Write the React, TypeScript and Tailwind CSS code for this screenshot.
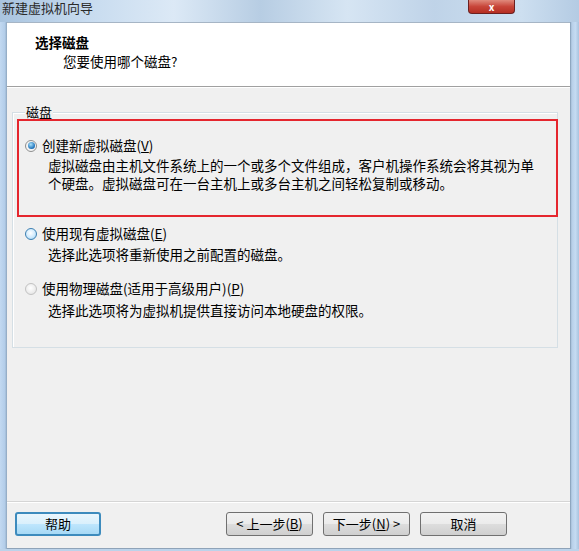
import React from 'react'

const font = { fontFamily: '"Noto Sans CJK SC", "Microsoft YaHei", sans-serif' }

function Radio({ state }: { state: 'on' | 'off' | 'disabled' }) {
  if (state === 'on') {
    return (
      <span className="w-[12px] h-[12px] rounded-full border border-[#8e8f8f] bg-[#f4f4f4] flex items-center justify-center shrink-0">
        <span className="w-[7px] h-[7px] rounded-full bg-[radial-gradient(circle_at_40%_35%,#a9e1fb,#1a6fb8_70%,#0f4b87)]" />
      </span>
    )
  }
  if (state === 'off') {
    return (
      <span className="w-[12px] h-[12px] rounded-full border border-[#3c7fb1] bg-[radial-gradient(circle_at_45%_40%,#ffffff,#cfeafd_55%,#8fcaf0)] shrink-0" />
    )
  }
  return (
    <span className="w-[12px] h-[12px] rounded-full border border-[#c2c2c2] bg-[radial-gradient(circle_at_45%_40%,#ffffff,#ececec_60%,#dadada)] shrink-0" />
  )
}

function Btn({ children, primary }: { children: React.ReactNode; primary?: boolean }) {
  return (
    <div
      className={
        'h-[24px] flex items-center justify-center rounded-[3px] text-[13px] text-black ' +
        (primary
          ? 'w-[86px] border-2 border-[#3d8bbd] bg-[linear-gradient(#eaf6fd,#d9f0fc_50%,#bee6fd_51%,#a7d9f5)]'
          : 'w-[87px] border border-[#707070] bg-[linear-gradient(#f2f2f2,#ebebeb_50%,#dddddd_51%,#cfcfcf)]')
      }
    >
      {children}
    </div>
  )
}

export default function App() {
  return (
    <div className="w-[579px] h-[551px] relative overflow-hidden bg-[#bcd3ea]" style={font}>
      {/* title bar */}
      <div className="h-[22px] relative bg-[linear-gradient(90deg,#a9c4df_0%,#c7dbef_15%,#dce9f6_30%,#b7cde3_45%,#d6e5f3_60%,#bfd3e8_75%,#cddff0_90%,#b4cbe3_100%)]">
        <div className="absolute left-[2px] top-0 text-[13px] leading-[16px] text-[#2a2a2a]">新建虚拟机向导</div>
        <div className="absolute left-[468px] top-0 w-[47px] h-[14px] rounded-b-[4px] border border-t-0 border-[#6b2020] bg-[linear-gradient(#e08a7c,#c8463a_50%,#b52e22)] flex items-center justify-center">
          <span className="text-white text-[10px] leading-[12px] font-bold">x</span>
        </div>
      </div>

      <div className="flex h-[527px]">
        <div className="w-[7px] bg-[linear-gradient(90deg,#c2d9f1,#b3cde9_70%,#8da5bd)]" />
        <div className="w-[563px] flex flex-col bg-[#f0f0f0] border-b border-[#8fa3b8]">
          {/* header */}
          <div className="h-[65px] bg-white border-t border-[#a6b5c5] border-b border-b-[#a0a0a0] relative shrink-0">
            <div className="absolute left-[28px] top-[11px] text-[13.5px] leading-[17px] font-bold text-black">选择磁盘</div>
            <div className="absolute left-[56px] top-[30px] text-[13.5px] leading-[17px] text-black">您要使用哪个磁盘?</div>
          </div>
          <div className="h-[1px] bg-white shrink-0" />

          {/* group box */}
          <div className="mt-[24px] ml-[5px] w-[546px] h-[236px] relative border border-[#d5dfe5] shadow-[inset_1px_1px_0_#ffffff]">
            <div className="absolute left-[12px] top-[-9px] text-[13px] leading-[15px] text-black px-[1px] bg-[#f0f0f0]">磁盘</div>

            <div className="mt-[6px] ml-[4px] w-[541px] h-[98px] border-2 border-[#e5262e] pl-[6px] pt-[16px]">
              <div className="flex items-center gap-[5px] h-[17px] text-[13.5px] leading-[17px] text-black">
                <Radio state="on" />
                <span>创建新虚拟磁盘(<span className="underline">V</span>)</span>
              </div>
              <div className="ml-[23px] mt-[2px] text-[13.5px] leading-[18px] text-black">
                <div>虚拟磁盘由主机文件系统上的一个或多个文件组成，客户机操作系统会将其视为单</div>
                <div>个硬盘。虚拟磁盘可在一台主机上或多台主机之间轻松复制或移动。</div>
              </div>
            </div>

            <div className="ml-[12px] mt-[8px] flex items-center gap-[5px] h-[17px] text-[13.5px] leading-[17px] text-black">
              <Radio state="off" />
              <span>使用现有虚拟磁盘(<span className="underline">E</span>)</span>
            </div>
            <div className="ml-[35px] mt-[4px] text-[13.5px] leading-[17px] text-black">选择此选项将重新使用之前配置的磁盘。</div>

            <div className="ml-[12px] mt-[17px] flex items-center gap-[5px] h-[17px] text-[13.5px] leading-[17px] text-black">
              <Radio state="disabled" />
              <span>使用物理磁盘(适用于高级用户)(<span className="underline">P</span>)</span>
            </div>
            <div className="ml-[35px] mt-[5px] text-[13.5px] leading-[17px] text-black">选择此选项将为虚拟机提供直接访问本地硬盘的权限。</div>
          </div>

          {/* footer */}
          <div className="mt-auto border-t border-[#d5d5d5] shadow-[inset_0_1px_0_#ffffff] h-[47px] flex items-start pt-[10px] pl-[8px] pr-[63px]">
            <Btn primary>帮助</Btn>
            <div className="ml-auto flex gap-[10px]">
              <Btn>&lt; 上一步(<span className="underline">B</span>)</Btn>
              <Btn>下一步(<span className="underline">N</span>) &gt;</Btn>
              <Btn>取消</Btn>
            </div>
          </div>
        </div>
        <div className="w-[9px] bg-[linear-gradient(90deg,#7f97b0,#b7cfe8_20%,#c5dbf2_60%,#a9c3de)]" />
      </div>
    </div>
  )
}
